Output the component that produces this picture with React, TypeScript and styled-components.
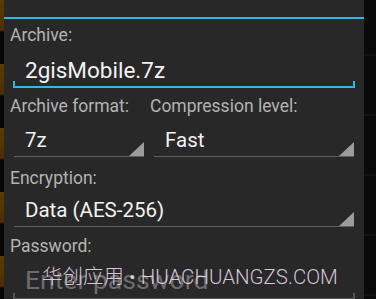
import React from 'react';
import styled, { createGlobalStyle } from 'styled-components';

const GlobalStyle = createGlobalStyle`
  html, body {
    margin: 0;
    padding: 0;
    background: #0a0a0b;
    overflow: hidden;
  }
  body {
    font-family: Roboto, "Noto Sans CJK SC", sans-serif;
  }
`;

const Screen = styled.div`
  display: flex;
  width: 376px;
  height: 299px;
  overflow: hidden;
`;

const LeftStrip = styled.div`
  width: 4px;
  flex: none;
  background: repeating-linear-gradient(
    to bottom,
    #5a3a08 0px,
    #4a3008 30px,
    #070707 32px,
    #070707 64px
  );
`;

const RightStrip = styled.div`
  flex: 1;
  background: repeating-linear-gradient(
    to bottom,
    #0a0a0b 0px,
    #0a0a0b 54px,
    #1b1b1c 55px,
    #0a0a0b 56px,
    #0a0a0b 60px
  );
`;

const Panel = styled.div`
  position: relative;
  width: 360px;
  flex: none;
  background: #282828;
  display: flex;
  flex-direction: column;
  overflow: hidden;
`;

const TitleEnd = styled.div`
  flex: none;
  height: 17px;
  border-bottom: 2px solid #33b5e5;
`;

const Body = styled.div`
  flex: none;
  padding: 0 10px;
  display: flex;
  flex-direction: column;
`;

const Label = styled.div<{ $top: number }>`
  flex: none;
  padding-top: ${p => p.$top}px;
  margin-left: -4px;
  line-height: 20px;
  font-size: 17.5px;
  color: #b4b4b4;
  white-space: nowrap;
`;

const EditText = styled.div<{ $focused?: boolean; $hint?: boolean; $size: number; $top: number; $line: number }>`
  flex: none;
  position: relative;
  margin: 0 -1px;
  padding: ${p => p.$top}px 12px 3px;
  line-height: ${p => p.$line}px;
  font-size: ${p => p.$size}px;
  color: ${p => (p.$hint ? '#6c6c6c' : '#f2f2f2')};
  border-bottom: 2px solid ${p => (p.$focused ? '#33b5e5' : '#555')};
  white-space: nowrap;

  &::before,
  &::after {
    content: '';
    position: absolute;
    bottom: 0;
    width: 2px;
    height: 5px;
    background: ${p => (p.$focused ? '#33b5e5' : '#555')};
  }
  &::before {
    left: 0;
  }
  &::after {
    right: 0;
  }
`;

const Row = styled.div`
  flex: none;
  display: grid;
  grid-template-columns: 130px 200px;
  column-gap: 10px;
`;

const Field = styled.div`
  display: flex;
  flex-direction: column;
`;

const Spinner = styled.div<{ $top: number }>`
  flex: none;
  position: relative;
  padding: ${p => p.$top}px 11px 4px;
  line-height: 24px;
  font-size: 20.5px;
  color: #f2f2f2;
  border-bottom: 1px solid #5e5e5e;
  white-space: nowrap;
`;

const Arrow = styled.svg`
  position: absolute;
  right: 0;
  bottom: 0;
`;

const Watermark = styled.div`
  position: absolute;
  left: 38px;
  top: 265px;
  font-size: 20.5px;
  font-weight: 300;
  line-height: 24px;
  color: rgba(236, 222, 240, 0.88);
  white-space: nowrap;
  pointer-events: none;
`;

const SpinnerArrow = () => (
  <Arrow width="15" height="14" viewBox="0 0 15 14">
    <polygon points="15,0 15,14 0,14" fill="#9c9c9c" />
  </Arrow>
);

export default function App() {
  return (
    <>
      <GlobalStyle />
      <Screen>
        <LeftStrip />
        <Panel>
          <TitleEnd />
          <Body>
            <Label $top={6}>Archive:</Label>
            <EditText $focused $size={22.5} $top={12} $line={26}>
              2gisMobile.7z
            </EditText>
            <Row>
              <Field>
                <Label $top={8}>Archive format:</Label>
                <Spinner $top={12}>
                  7z
                  <SpinnerArrow />
                </Spinner>
              </Field>
              <Field>
                <Label $top={8}>Compression level:</Label>
                <Spinner $top={12}>
                  Fast
                  <SpinnerArrow />
                </Spinner>
              </Field>
            </Row>
            <Label $top={11}>Encryption:</Label>
            <Spinner $top={10}>
              Data (AES-256)
              <SpinnerArrow />
            </Spinner>
            <Label $top={9}>Password:</Label>
            <EditText $hint $size={26.5} $top={9} $line={30}>
              Enter password
            </EditText>
          </Body>
          <Watermark>华创应用 • HUACHUANGZS.COM</Watermark>
        </Panel>
        <RightStrip />
      </Screen>
    </>
  );
}
